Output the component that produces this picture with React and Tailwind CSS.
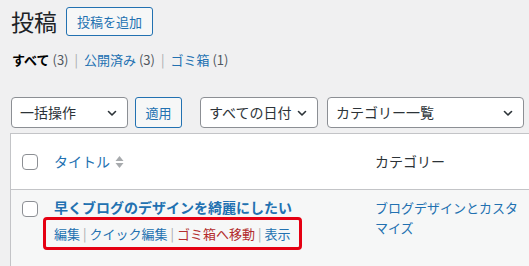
import React from 'react';

const Chevron = ({ className = '' }) => (
  <svg width="12" height="12" viewBox="0 0 12 12" className={className} aria-hidden="true">
    <path d="M2.5 4.5 L6 8 L9.5 4.5" fill="none" stroke="#2c3338" strokeWidth="1.6" strokeLinecap="round" strokeLinejoin="round" />
  </svg>
);

const SortArrows = () => (
  <svg width="9" height="14" viewBox="0 0 9 14" className="ml-[5px]" aria-hidden="true">
    <path d="M4.5 1 L8.5 6 H0.5 Z" fill="#a7aaad" />
    <path d="M4.5 13 L8.5 8 H0.5 Z" fill="#a7aaad" />
  </svg>
);

const Select = ({ label, width }) => (
  <div
    className={`${width} h-[31px] shrink-0 flex items-center justify-between bg-white border border-[#8c8f94] rounded-[4px] pl-[8px] pr-[9px] text-[14px] text-[#2c3338]`}
  >
    <span>{label}</span>
    <Chevron />
  </div>
);

const Checkbox = () => (
  <div className="w-[16px] h-[16px] bg-white border border-[#8c8f94] rounded-[4px]" />
);

const Sep = () => <span className="text-[#a7aaad] mx-[3px]">|</span>;
const WideSep = () => <span className="text-[#a7aaad] mx-[6px]">|</span>;

export default function App() {
  return (
    <div
      className="w-[529px] h-[266px] overflow-hidden bg-[#f0f0f1] pl-[10px] text-[#3c434a]"
      style={{ fontFamily: '"Noto Sans CJK JP", "Noto Sans", sans-serif' }}
    >
      {/* Heading */}
      <div className="flex items-center pt-[7px]">
        <h1 className="ml-[1px] text-[23px] leading-[29px] text-[#1d2327] mr-[9px]">投稿</h1>
        <button className="h-[29px] px-[10px] border border-[#2271b1] rounded-[3px] bg-[#f6f7f7] text-[13px] text-[#2271b1] leading-none">
          投稿を追加
        </button>
      </div>

      {/* Status filter */}
      <div className="mt-[14px] ml-[2px] text-[13px] leading-[20px] text-[#50575e]">
        <span className="font-bold text-black">すべて</span> (3)
        <WideSep />
        <span className="text-[#2271b1]">公開済み</span> (3)
        <WideSep />
        <span className="text-[#2271b1]">ゴミ箱</span> (1)
      </div>

      {/* Bulk actions / filters */}
      <div className="mt-[27px] ml-[1px] flex items-center">
        <Select label="一括操作" width="w-[117px]" />
        <button className="ml-[7px] w-[47px] h-[31px] border border-[#2271b1] rounded-[3px] bg-[#f6f7f7] text-[13px] text-[#2271b1]">
          適用
        </button>
        <div className="ml-[18px]">
          <Select label="すべての日付" width="w-[118px]" />
        </div>
        <div className="ml-[9px]">
          <Select label="カテゴリー一覧" width="w-[197px]" />
        </div>
      </div>

      {/* Table */}
      <div className="mt-[5px] w-[540px] bg-white border border-[#c3c4c7]">
        <div className="h-[56px] flex items-center border-b border-[#c3c4c7]">
          <div className="w-[32px] pl-[11px]">
            <Checkbox />
          </div>
          <div className="w-[322px] pl-[11px] flex items-center text-[14px] text-[#2271b1]">
            タイトル
            <SortArrows />
          </div>
          <div className="pl-[10px] text-[14px] text-[#2c3338]">カテゴリー</div>
        </div>

        <div className="h-[80px] flex items-start bg-[#f6f7f7]">
          <div className="w-[32px] pl-[11px] pt-[11px]">
            <Checkbox />
          </div>
          <div className="w-[322px] pl-[11px] pt-[8px]">
            <div className="text-[14px] leading-[19px] font-bold text-[#2271b1]">
              早くブログのデザインを綺麗にしたい
            </div>
            <div className="-ml-[11px] inline-flex items-center h-[33px] border-[3px] border-[#e50012] rounded-[4px] pl-[8px] pr-[8px] text-[13px] text-[#2271b1] whitespace-nowrap">
              編集<Sep />クイック編集<Sep />
              <span className="text-[#b32d2e]">ゴミ箱へ移動</span>
              <Sep />表示
            </div>
          </div>
          <div className="pl-[10px] pt-[8px] w-[156px] text-[13px] leading-[20px] text-[#2271b1]">
            ブログデザインとカスタマイズ
          </div>
        </div>
      </div>
    </div>
  );
}
